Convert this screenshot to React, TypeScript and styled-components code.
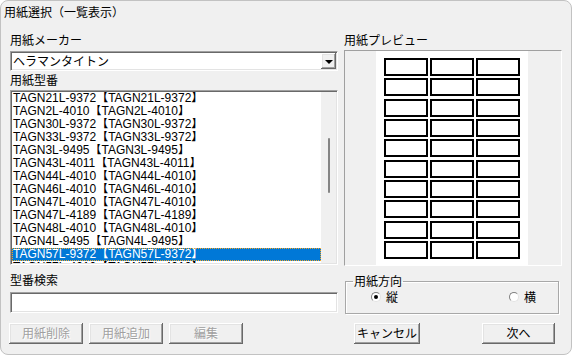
import React from 'react';
import styled, { createGlobalStyle } from 'styled-components';

const GlobalStyle = createGlobalStyle`
  html, body {
    margin: 0;
    padding: 0;
    background: #ffffff;
  }
  body {
    font-family: "Noto Sans CJK JP", "Noto Sans", sans-serif;
    font-size: 12px;
    color: #000;
  }
  * {
    box-sizing: border-box;
  }
`;

const sunken = `
  border: 1px solid;
  border-color: #a0a0a0 #ffffff #ffffff #a0a0a0;
  box-shadow: inset 1px 1px 0 #696969, inset -1px -1px 0 #e3e3e3;
`;

const raised = `
  border: none;
  box-shadow: inset -1px -1px 0 #696969, inset 1px 1px 0 #ffffff,
    inset -2px -2px 0 #a0a0a0, inset 2px 2px 0 #e3e3e3;
  background: #f0f0f0;
`;

const Window = styled.div`
  width: 572px;
  height: 355px;
  background: #f0f0f0;
  border: 1px solid #c2c2c2;
  border-radius: 8px;
  overflow: hidden;
  display: flex;
  flex-direction: column;
`;

const Title = styled.div`
  height: 31px;
  padding: 3px 0 0 3px;
  line-height: 16px;
`;

const Body = styled.div`
  display: flex;
  gap: 6px;
  padding: 0 9px;
`;

const Column = styled.div<{ $width: number }>`
  width: ${({ $width }) => $width}px;
  display: flex;
  flex-direction: column;
`;

const Label = styled.div<{ $mt?: number }>`
  height: 16px;
  line-height: 16px;
  margin-top: ${({ $mt }) => $mt ?? 0}px;
  white-space: nowrap;
`;

const Combo = styled.div`
  ${sunken}
  margin-top: 3px;
  height: 20px;
  background: #fff;
  display: flex;
  align-items: stretch;
  padding: 1px;
`;

const ComboText = styled.div`
  flex: 1;
  line-height: 16px;
  padding-left: 1px;
`;

const DropButton = styled.div`
  ${raised}
  width: 15px;
  display: flex;
  align-items: center;
  justify-content: center;

  &::after {
    content: '';
    border-left: 4px solid transparent;
    border-right: 4px solid transparent;
    border-top: 4px solid #000;
    margin-top: 1px;
  }
`;

const ListBox = styled.div`
  ${sunken}
  margin-top: 2px;
  height: 175px;
  background: #fff;
  padding: 1px;
  display: flex;
  overflow: hidden;
`;

const ListItems = styled.div`
  flex: 1;
  overflow: hidden;
`;

const ListRow = styled.div<{ $selected?: boolean }>`
  height: 13px;
  line-height: 13px;
  padding-left: 1px;
  font-family: "Liberation Sans", "Noto Sans CJK JP", sans-serif;
  white-space: nowrap;
  overflow: hidden;
  background: ${({ $selected }) => ($selected ? '#0078d7' : 'transparent')};
  color: ${({ $selected }) => ($selected ? '#fff' : '#000')};
  outline: ${({ $selected }) => ($selected ? '1px dotted #f5a623' : 'none')};
  outline-offset: -1px;
`;

const ScrollBar = styled.div`
  width: 15px;
  background: #f0f0f0;
  display: flex;
  justify-content: center;
  padding-top: 46px;
`;

const ScrollThumb = styled.div`
  width: 2px;
  height: 55px;
  border-radius: 1px;
  background: #858585;
`;

const TextInput = styled.div`
  ${sunken}
  margin-top: 4px;
  height: 21px;
  background: #fff;
`;

const ButtonRow = styled.div<{ $spread?: boolean }>`
  display: flex;
  gap: 6px;
  margin-top: ${({ $spread }) => ($spread ? 9 : 10)}px;
  justify-content: ${({ $spread }) => ($spread ? 'space-between' : 'flex-start')};
  padding: ${({ $spread }) => ($spread ? '0 7px 0 10px' : '0')};
  margin-left: ${({ $spread }) => ($spread ? 0 : -1)}px;
`;

const Button = styled.div<{ $width: number; $disabled?: boolean }>`
  ${raised}
  width: ${({ $width }) => $width}px;
  height: 21px;
  display: flex;
  align-items: center;
  justify-content: center;
  padding-bottom: 2px;
  line-height: 16px;
  color: ${({ $disabled }) => ($disabled ? '#a0a0a0' : '#000')};
  text-shadow: ${({ $disabled }) => ($disabled ? '1px 1px 0 #fff' : 'none')};
`;

const PreviewBox = styled.div`
  margin-top: 2px;
  height: 216px;
  border: 1px solid;
  border-color: #a0a0a0 #ffffff #ffffff #a0a0a0;
  padding-left: 31px;
  overflow: hidden;
`;

const Page = styled.div`
  width: 152px;
  height: 100%;
  background: #fff;
  padding: 7px 0 0 8px;
  display: grid;
  grid-template-columns: repeat(3, 44px);
  grid-template-rows: repeat(10, 18px);
  column-gap: 2px;
  row-gap: 2.33px;
  align-content: start;
`;

const LabelCell = styled.div`
  border: 2px solid #000;
  background: #fff;
`;

const GroupBox = styled.fieldset`
  margin: 7px 3px 0 1px;
  padding: 0 0 8px 0;
  border: 1px solid #a8a8a8;
  box-shadow: 1px 1px 0 #fff, inset 1px 1px 0 #fff;
  min-width: 0;
`;

const Legend = styled.legend`
  margin-left: 7px;
  padding: 0 1px;
  line-height: 16px;
`;

const RadioRow = styled.div`
  display: flex;
  justify-content: space-between;
  padding: 0 22px 0 25px;
  line-height: 16px;
`;

const RadioOption = styled.div`
  display: flex;
  align-items: center;
  gap: 5px;
`;

const RadioCircle = styled.span<{ $checked?: boolean }>`
  width: 10px;
  height: 10px;
  border-radius: 50%;
  background: #fff;
  border: 1px solid;
  border-color: #808080 #e3e3e3 #e3e3e3 #808080;
  display: flex;
  align-items: center;
  justify-content: center;

  &::after {
    content: '';
    width: 4px;
    height: 4px;
    border-radius: 50%;
    background: ${({ $checked }) => ($checked ? '#000' : 'transparent')};
  }
`;

const items = [
  'TAGN21L-9372【TAGN21L-9372】',
  'TAGN2L-4010【TAGN2L-4010】',
  'TAGN30L-9372【TAGN30L-9372】',
  'TAGN33L-9372【TAGN33L-9372】',
  'TAGN3L-9495【TAGN3L-9495】',
  'TAGN43L-4011【TAGN43L-4011】',
  'TAGN44L-4010【TAGN44L-4010】',
  'TAGN46L-4010【TAGN46L-4010】',
  'TAGN47L-4010【TAGN47L-4010】',
  'TAGN47L-4189【TAGN47L-4189】',
  'TAGN48L-4010【TAGN48L-4010】',
  'TAGN4L-9495【TAGN4L-9495】',
  'TAGN57L-9372【TAGN57L-9372】',
  'TAGN57L-4010【TAGN57L-4010】',
];

const selectedIndex = 12;

export default function App() {
  return (
    <>
      <GlobalStyle />
      <Window>
        <Title>用紙選択（一覧表示）</Title>
        <Body>
          <Column $width={328}>
            <Label>用紙メーカー</Label>
            <Combo>
              <ComboText>ヘラマンタイトン</ComboText>
              <DropButton />
            </Combo>
            <Label $mt={1}>用紙型番</Label>
            <ListBox>
              <ListItems>
                {items.map((item, i) => (
                  <ListRow key={item + i} $selected={i === selectedIndex}>
                    {item}
                  </ListRow>
                ))}
              </ListItems>
              <ScrollBar>
                <ScrollThumb />
              </ScrollBar>
            </ListBox>
            <Label $mt={7}>型番検索</Label>
            <TextInput />
            <ButtonRow>
              <Button $width={74} $disabled>用紙削除</Button>
              <Button $width={74} $disabled>用紙追加</Button>
              <Button $width={74} $disabled>編集</Button>
            </ButtonRow>
          </Column>
          <Column $width={218}>
            <Label>用紙プレビュー</Label>
            <PreviewBox>
              <Page>
                {Array.from({ length: 30 }).map((_, i) => (
                  <LabelCell key={i} />
                ))}
              </Page>
            </PreviewBox>
            <GroupBox>
              <Legend>用紙方向</Legend>
              <RadioRow>
                <RadioOption>
                  <RadioCircle $checked />
                  縦
                </RadioOption>
                <RadioOption>
                  <RadioCircle />
                  横
                </RadioOption>
              </RadioRow>
            </GroupBox>
            <ButtonRow $spread>
              <Button $width={66}>キャンセル</Button>
              <Button $width={73}>次へ</Button>
            </ButtonRow>
          </Column>
        </Body>
      </Window>
    </>
  );
}
